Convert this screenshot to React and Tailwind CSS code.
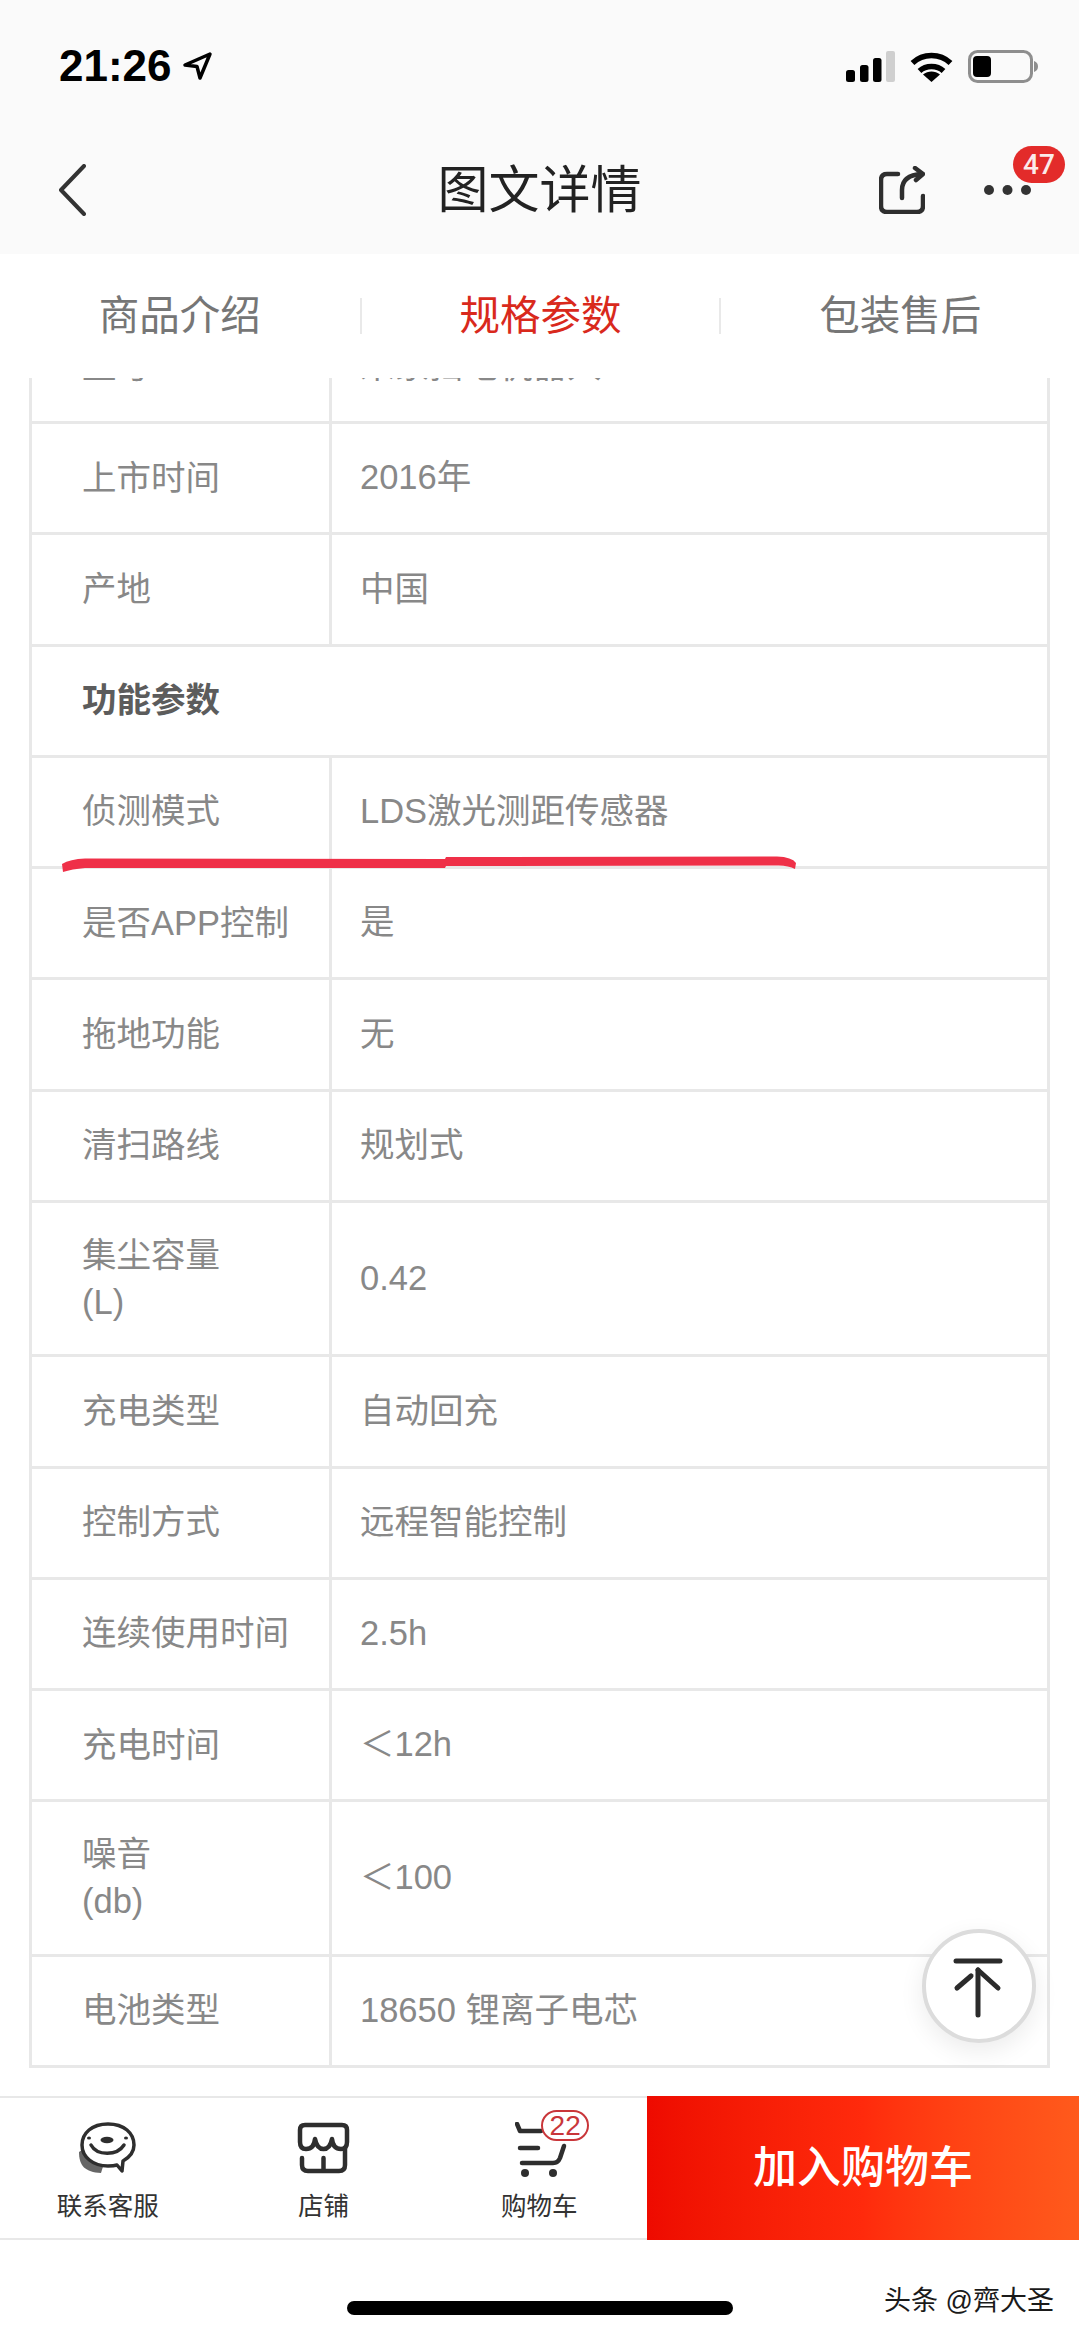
const rows = [
  { l: "型号", v: "米家扫地机器人" },
  { l: "上市时间", v: "2016年" },
  { l: "产地", v: "中国" },
  { group: "功能参数" },
  { l: "侦测模式", v: "LDS激光测距传感器" },
  { l: "是否APP控制", v: "是" },
  { l: "拖地功能", v: "无" },
  { l: "清扫路线", v: "规划式" },
  { l: "集尘容量", l2: "(L)", v: "0.42" },
  { l: "充电类型", v: "自动回充" },
  { l: "控制方式", v: "远程智能控制" },
  { l: "连续使用时间", v: "2.5h" },
  { l: "充电时间", v: "＜12h" },
  { l: "噪音", l2: "(db)", v: "＜100" },
  { l: "电池类型", v: "18650 锂离子电芯" },
];

function Row({ r }) {
  if (r.group) {
    return (
      <div className="flex h-[111.25px] items-center border-b-[3px] border-[#e8e8e8] pl-[50px] text-[34.5px] font-bold text-[#5c5c5c]">
        {r.group}
      </div>
    );
  }
  return (
    <div className={`flex border-b-[3px] border-[#e8e8e8] ${r.l2 ? "h-[154.5px]" : "h-[111.25px]"}`}>
      <div className="flex w-[300px] shrink-0 flex-col justify-center border-r-[3px] border-[#e8e8e8] pl-[50px] leading-[47px]">
        <div>{r.l}</div>
        {r.l2 && <div>{r.l2}</div>}
      </div>
      <div className="flex items-center pl-[28px]">{r.v}</div>
    </div>
  );
}

function StatusBar() {
  return (
    <div className="flex h-[132px] items-center justify-between pl-[59px] pr-[41px]">
      <div className="flex items-center gap-[10px]">
        <span className="text-[44px] font-bold leading-none text-black">21:26</span>
        <svg width="31" height="30" viewBox="0 0 31 30" fill="none" stroke="#000" strokeWidth="3.5" strokeLinejoin="round">
          <path d="M28 3 L3 14 L15 15.5 L18 27 Z" />
        </svg>
      </div>
      <div className="flex items-center gap-[15px]">
        <svg width="49" height="31" viewBox="0 0 49 31">
          <rect x="0" y="19" width="9" height="12" rx="2.5" fill="#000" />
          <rect x="14" y="14" width="8.5" height="17" rx="2.5" fill="#000" />
          <rect x="27" y="7" width="8.5" height="24" rx="2.5" fill="#000" />
          <rect x="40" y="0" width="9" height="31" rx="2" fill="#cfcfcf" />
        </svg>
        <svg width="43" height="31" viewBox="0 0 43 31" fill="none" stroke="#000" strokeWidth="5.5">
          <path d="M2.5 12 C13 2 30 2 40.5 12" />
          <path d="M9.5 20 C16 14 27 14 33.5 20" />
          <path d="M21.5 31 L13 23.5 C18 19.5 25 19.5 30 23.5 Z" fill="#000" stroke="none" />
        </svg>
        <svg width="70" height="33" viewBox="0 0 70 33">
          <rect x="1.5" y="1.5" width="62" height="30" rx="8" fill="none" stroke="#8e8e8e" strokeWidth="3" />
          <rect x="5" y="6" width="18" height="21" rx="4" fill="#000" />
          <path d="M66 11 C69 12 70 14 70 16.5 C70 19 69 21 66 22 Z" fill="#8e8e8e" />
        </svg>
      </div>
    </div>
  );
}

function NavBar() {
  return (
    <div className="grid h-[122px] grid-cols-3 items-center pb-[6px] pl-[58px] pr-[48px]">
      <div>
        <svg width="28" height="52" viewBox="0 0 28 52" fill="none" stroke="#333" strokeWidth="4" strokeLinecap="round" strokeLinejoin="round">
          <path d="M26 2 L3 26 L26 50" />
        </svg>
      </div>
      <div className="whitespace-nowrap pr-[10px] text-center text-[51px] leading-none text-[#222]">图文详情</div>
      <div className="flex items-center justify-end gap-[59px]">
        <svg width="46" height="48" viewBox="0 0 46 48" fill="none" stroke="#2e2e2e" strokeWidth="4.5" strokeLinecap="round" strokeLinejoin="round">
          <path d="M19 8 H8 Q2 8 2 14 V40 Q2 46 8 46 H38 Q44 46 44 40 V30" />
          <path d="M23 32 V24 Q23 9 43 8" />
          <path d="M36 2 L44 8 L37 14" />
        </svg>
        <div className="relative h-[10px] w-[47px]">
          <svg width="47" height="10" viewBox="0 0 47 10" className="block">
            <circle cx="5" cy="5" r="5" fill="#333" />
            <circle cx="23.5" cy="5" r="5" fill="#333" />
            <circle cx="42" cy="5" r="5" fill="#333" />
          </svg>
          <div className="absolute left-[29px] top-[-39px] flex h-[37px] w-[52px] items-center justify-center rounded-full bg-[#e32b2a] font-['Roboto',sans-serif] text-[28px] font-medium leading-none text-[#fbeaea]">
            47
          </div>
        </div>
      </div>
    </div>
  );
}

function Tabs() {
  const tabs = ["商品介绍", "规格参数", "包装售后"];
  return (
    <div className="grid h-[124px] grid-cols-3 items-center bg-white text-[40.5px] leading-none text-[#767676]">
      {tabs.map((t, i) => (
        <div
          key={t}
          className={`flex h-[36px] items-center justify-center ${i > 0 ? "border-l-2 border-[#e9e9e9]" : ""} ${i === 1 ? "text-[#d9291c]" : ""}`}
        >
          {t}
        </div>
      ))}
    </div>
  );
}

function FaceIcon() {
  return (
    <svg width="58" height="52" viewBox="0 0 58 52">
      <path d="M0 30 C0 44 6 50 22 51 L26 38 L6 26 Z" fill="#666" />
      <path d="M29 2 C13 2 3 11 3 23 C3 35 14 44 29 44 C32 44 35 44 38 43 L43 49 L44 39 C51 35 55 30 55 23 C55 11 45 2 29 2 Z" fill="#fff" stroke="#2e2e2e" strokeWidth="3.5" strokeLinejoin="round" />
      <ellipse cx="28" cy="18" rx="6.5" ry="3.2" fill="#2e2e2e" />
      <ellipse cx="10" cy="16" rx="2" ry="1.5" fill="#2e2e2e" />
      <ellipse cx="47" cy="16" rx="2" ry="1.5" fill="#2e2e2e" />
      <path d="M12 23 C18 34 38 34 45 23" fill="none" stroke="#2e2e2e" strokeWidth="3.5" strokeLinecap="round" />
    </svg>
  );
}

function StoreIcon() {
  return (
    <svg width="53" height="52" viewBox="0 0 53 52" fill="none" stroke="#2e2e2e" strokeWidth="4.5" strokeLinecap="round" strokeLinejoin="round">
      <path d="M3 20 V8 Q3 3 8 3 H45 Q50 3 50 8 V20 Q50 27 44 27 Q36 27 35 17 Q33 27 26.5 27 Q20 27 18 17 Q17 27 9 27 Q3 27 3 20 Z" />
      <path d="M5 36 V43 Q5 49 11 49 H42 Q48 49 48 43 V27" />
      <path d="M26.5 36 V48" />
    </svg>
  );
}

function CartIcon() {
  return (
    <div className="relative ml-[4px] h-[58px] w-[52px]">
      <svg width="52" height="58" viewBox="0 0 52 58" fill="none" stroke="#2e2e2e" strokeWidth="4.5" strokeLinecap="round" strokeLinejoin="round">
        <path d="M2 2 L5 9 H26" />
        <path d="M5 26 H23" />
        <path d="M49 24 L45 36 Q43 41 38 41 H7" />
        <circle cx="10" cy="51" r="4" fill="#2e2e2e" stroke="none" />
        <circle cx="38" cy="51" r="4" fill="#2e2e2e" stroke="none" />
      </svg>
      <div className="absolute left-[26px] top-[-12px] flex h-[31px] w-[48px] items-center justify-center rounded-full border-[2.5px] border-[#c9363a] bg-white text-[28px] font-light leading-none text-[#c9363a]">
        22
      </div>
    </div>
  );
}

function BottomBar() {
  const items = [
    { label: "联系客服", icon: <FaceIcon /> },
    { label: "店铺", icon: <StoreIcon /> },
    { label: "购物车", icon: <CartIcon /> },
  ];
  return (
    <div className="flex h-[144px] border-b-2 border-t-2 border-[#e8e8e8]">
      <div className="grid w-[647px] grid-cols-3">
        {items.map((it) => (
          <div key={it.label} className="flex flex-col items-center pt-[24px]">
            <div className="flex h-[58px] items-start">{it.icon}</div>
            <div className="mt-[14px] text-[25.5px] leading-none text-[#333]">{it.label}</div>
          </div>
        ))}
      </div>
      <div className="-my-[2px] flex flex-1 items-center justify-center bg-gradient-to-r from-[#ee0a00] via-[#ff2a0c] to-[#ff5a1c] text-[44px] font-medium leading-none text-white">
        加入购物车
      </div>
    </div>
  );
}

export default function App() {
  return (
    <div className="relative flex h-[2338px] w-[1079px] flex-col overflow-hidden bg-white font-['Liberation_Sans','Noto_Sans_CJK_SC',sans-serif]">
      <div className="bg-[#fafafa]">
        <StatusBar />
        <NavBar />
      </div>
      <Tabs />
      <div className="min-h-0 flex-1 overflow-hidden px-[29px]">
        <div className="-mt-[65.25px] border-x-[3px] border-[#e8e8e8] text-[34.5px] text-[#888888]">
          {rows.map((r, i) => (
            <Row key={i} r={r} />
          ))}
        </div>
      </div>
      <BottomBar />
      <div className="flex h-[98px] justify-center pt-[61px]">
        <div className="h-[14px] w-[386px] rounded-full bg-black" />
      </div>

      <svg className="absolute left-[60px] top-[855px]" width="740" height="18" viewBox="0 0 740 18">
        <path d="M2 9 Q10 4 25 3.5 L385 4 L386 2 L717 1.5 Q732 2 736 8 L735 14 Q728 10 716 10.5 L386 11 L385 13 L25 13 Q12 14 3 17 Z" fill="#ef3048" />
      </svg>

      <div className="absolute left-[922px] top-[1929px] flex h-[114px] w-[114px] items-center justify-center rounded-full border-4 border-[#dcdcdc] bg-white shadow-[0_8px_24px_rgba(0,0,0,0.08)]">
        <svg className="ml-[-3px] mt-[4px]" width="50" height="60" viewBox="0 0 50 60" fill="none" stroke="#2b2b2b" strokeWidth="5" strokeLinecap="round">
          <path d="M3 3 H47" />
          <path d="M25 12 V57" />
          <path d="M25 12 L45 30" />
          <path d="M4 30 L18 18" />
        </svg>
      </div>

      <div className="absolute left-[884px] top-[2285px] text-[27px] leading-[32px] text-[#1a1a1a]">头条 @齊大圣</div>
    </div>
  );
}
